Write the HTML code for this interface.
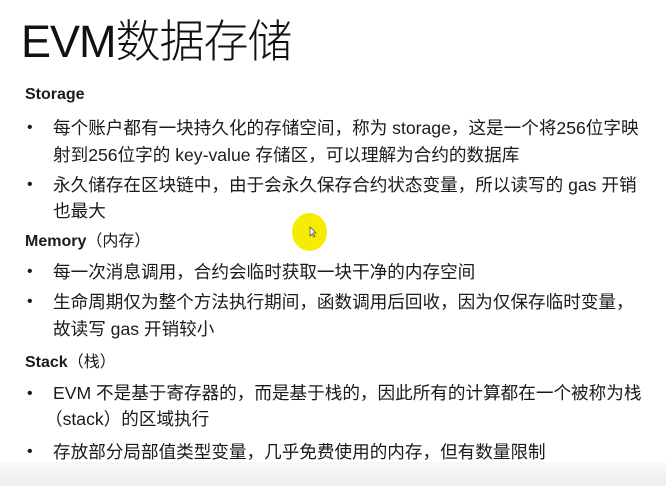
<!DOCTYPE html>
<html><head><meta charset="utf-8"><style>
body{margin:0;width:666px;height:486px;background:#fff;position:relative;overflow:hidden;font-family:"Liberation Sans","Noto Sans CJK SC",sans-serif;color:#1a1a1a}
.t{position:absolute;white-space:nowrap;font-size:17.6px;line-height:20px}
.h{font-weight:bold;font-size:16px}
.b{position:absolute;left:27px;font-size:16px;line-height:20px}
#title{position:absolute;left:21px;top:14px;font-size:45px;line-height:56px;font-weight:300;color:#111;white-space:nowrap;letter-spacing:-1px}
#bot{position:absolute;left:0;top:462px;width:666px;height:24px;background:linear-gradient(#f8f8f8,#eeeeee)}
#dot{position:absolute;left:292px;top:213px;width:35px;height:38px;border-radius:50%;background:#f5ec00}
</style></head><body>
<div id="title">EVM数据存储</div>
<div class="t h" style="left:25px;top:85px">Storage</div>
<div class="b" style="top:118px">•</div>
<div class="t" style="left:53px;top:118px">每个账户都有一块持久化的存储空间，称为 storage，这是一个将256位字映</div>
<div class="t" style="left:53px;top:145px">射到256位字的 key-value 存储区，可以理解为合约的数据库</div>
<div class="b" style="top:175px">•</div>
<div class="t" style="left:53px;top:175px">永久储存在区块链中，由于会永久保存合约状态变量，所以读写的 gas 开销</div>
<div class="t" style="left:53px;top:201px">也最大</div>
<div class="t h" style="left:25px;top:232px">Memory<span style="font-weight:normal">（内存）</span></div>
<div class="b" style="top:262px">•</div>
<div class="t" style="left:53px;top:262px">每一次消息调用，合约会临时获取一块干净的内存空间</div>
<div class="b" style="top:292px">•</div>
<div class="t" style="left:53px;top:292px">生命周期仅为整个方法执行期间，函数调用后回收，因为仅保存临时变量，</div>
<div class="t" style="left:53px;top:319px">故读写 gas 开销较小</div>
<div class="t h" style="left:25px;top:353px">Stack<span style="font-weight:normal">（栈）</span></div>
<div class="b" style="top:384px">•</div>
<div class="t" style="left:53px;top:383px">EVM 不是基于寄存器的，而是基于栈的，因此所有的计算都在一个被称为栈</div>
<div class="t" style="left:45px;top:409px">（stack）的区域执行</div>
<div class="b" style="top:442px">•</div>
<div class="t" style="left:53px;top:442px">存放部分局部值类型变量，几乎免费使用的内存，但有数量限制</div>
<div id="bot"></div>
<div id="dot"></div>
<svg style="position:absolute;left:309px;top:226px" width="8" height="12"><path d="M1 1 L1 10 L3 8 L5 11 L6 10 L4 7 L7 7 Z" fill="#fff" stroke="#555" stroke-width="0.8"/></svg>
</body></html>
